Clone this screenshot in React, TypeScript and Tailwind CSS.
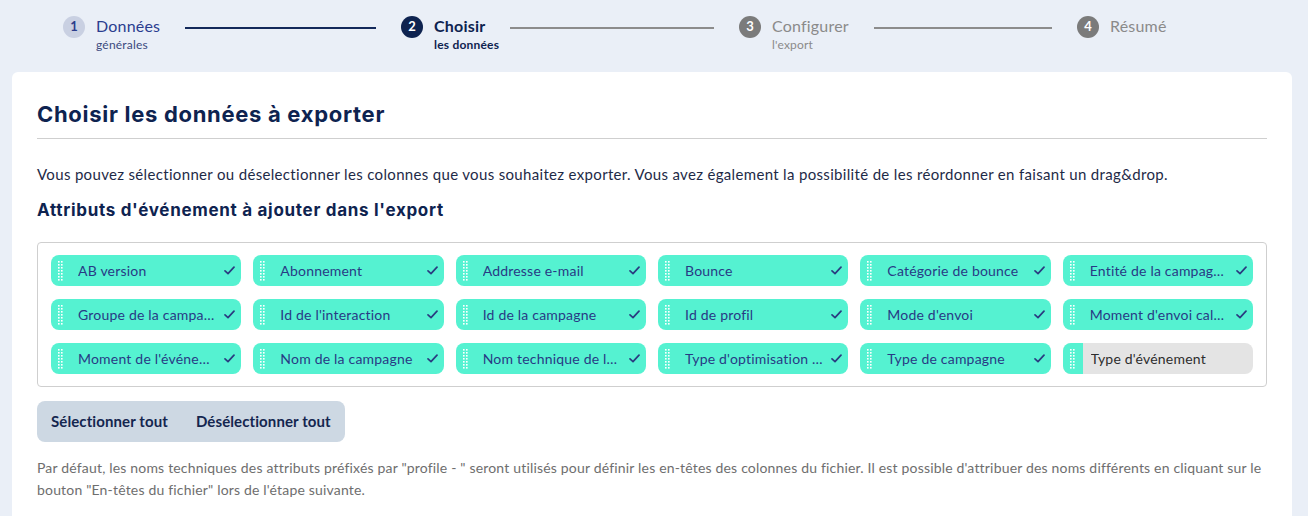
import React from "react";

const body = { fontFamily: "Lato, 'Open Sans', sans-serif" };
const head = { fontFamily: "Inter, 'Noto Sans', sans-serif" };

function Handle() {
  const dots = [];
  for (let r = 0; r < 7; r++) {
    dots.push(<rect key={"a" + r} x={0} y={r * 3} width={1.6} height={1.6} fill="#fff" />);
    dots.push(<rect key={"b" + r} x={3} y={r * 3} width={1.6} height={1.6} fill="#fff" />);
  }
  return (
    <svg width="5" height="20" viewBox="0 0 5 20" className="shrink-0">
      {dots}
    </svg>
  );
}

function Check() {
  return (
    <svg width="11" height="9" viewBox="0 0 11 9" className="shrink-0">
      <path d="M1 4.8 L4 7.6 L10 1.2" fill="none" stroke="#2a3b80" strokeWidth="1.7" strokeLinecap="round" strokeLinejoin="round" />
    </svg>
  );
}

const chips: { label: string; on: boolean }[] = [
  { label: "AB version", on: true },
  { label: "Abonnement", on: true },
  { label: "Addresse e-mail", on: true },
  { label: "Bounce", on: true },
  { label: "Catégorie de bounce", on: true },
  { label: "Entité de la campag…", on: true },
  { label: "Groupe de la campa…", on: true },
  { label: "Id de l'interaction", on: true },
  { label: "Id de la campagne", on: true },
  { label: "Id de profil", on: true },
  { label: "Mode d'envoi", on: true },
  { label: "Moment d'envoi cal…", on: true },
  { label: "Moment de l'événe…", on: true },
  { label: "Nom de la campagne", on: true },
  { label: "Nom technique de l…", on: true },
  { label: "Type d'optimisation …", on: true },
  { label: "Type de campagne", on: true },
  { label: "Type d'événement", on: false },
];

function Chip({ label, on }: { label: string; on: boolean }) {
  if (on) {
    return (
      <div className="h-[31px] rounded-[8px] bg-[#55f2d1] flex items-center pl-[7px] pr-[6px]">
        <Handle />
        <span className="ml-[15px] flex-1 min-w-0 truncate text-[14px] tracking-[0.2px] text-[#283a85]">{label}</span>
        <Check />
      </div>
    );
  }
  return (
    <div className="h-[31px] rounded-[8px] bg-[#e4e4e4] flex items-center overflow-hidden">
      <div className="h-full w-[20px] bg-[#55f2d1] flex items-center pl-[7px]">
        <Handle />
      </div>
      <span className="ml-[8px] flex-1 min-w-0 truncate text-[14px] tracking-[0.2px] text-[#2d2d2d]">{label}</span>
    </div>
  );
}

function Step({
  n,
  title,
  sub,
  state,
  line,
}: {
  n: number;
  title: string;
  sub?: string;
  state: "done" | "active" | "todo";
  line?: "dark" | "grey";
}) {
  const circle =
    state === "done"
      ? "bg-[#c9d0e2] text-[#2b3d8c]"
      : state === "active"
      ? "bg-[#0e2350] text-white"
      : "bg-[#7b7b7b] text-white";
  const titleCls =
    state === "done"
      ? "text-[#2b3d8f] font-normal"
      : state === "active"
      ? "text-[#0e2350] font-bold"
      : "text-[#8a8a8a] font-normal";
  const subCls =
    state === "done"
      ? "text-[#3b4a7e] font-normal"
      : state === "active"
      ? "text-[#0e2350] font-bold"
      : "text-[#8a8a8a] font-normal";
  return (
    <div className={line ? "w-[338px] flex items-start shrink-0" : "flex items-start shrink-0"}>
      <div className={"w-[22px] h-[22px] rounded-full flex items-center justify-center text-[13px] font-bold shrink-0 " + circle}>
        {n}
      </div>
      <div className="relative ml-[11px] -mt-[1px]">
        <div className={"text-[16px] leading-[22px] tracking-[0.2px] whitespace-nowrap " + titleCls}>{title}</div>
        {sub && (
          <div className={"absolute left-0 top-[22px] text-[12px] leading-[16px] tracking-[0.2px] whitespace-nowrap " + subCls}>{sub}</div>
        )}
      </div>
      {line && (
        <div
          className={
            "flex-1 mx-[25px] mt-[11px] h-[1.5px] " + (line === "dark" ? "bg-[#13295a]" : "bg-[#8c8c8c]")
          }
        />
      )}
    </div>
  );
}

export default function App() {
  return (
    <div className="h-[516px] bg-[#eaeff7] overflow-hidden" style={body}>
      <div className="flex pl-[63px] pt-[16px] h-[72px]">
        <Step n={1} title="Données" sub="générales" state="done" line="dark" />
        <Step n={2} title="Choisir" sub="les données" state="active" line="grey" />
        <Step n={3} title="Configurer" sub="l'export" state="todo" line="grey" />
        <Step n={4} title="Résumé" state="todo" />
      </div>
      <div className="ml-[12px] mr-[16px] bg-white rounded-t-[6px] px-[25px] pt-[27px] pb-[30px]">
        <h1 className="text-[22px] leading-[30px] font-bold tracking-[0.7px] text-[#0e2350] pb-[9px] border-b border-[#cfcfcf]" style={head}>
          Choisir les données à exporter
        </h1>
        <p className="mt-[24px] text-[15px] leading-[22px] tracking-[0.33px] text-[#1e2a47]">
          Vous pouvez sélectionner ou déselectionner les colonnes que vous souhaitez exporter. Vous avez également la possibilité de les réordonner en faisant un drag&amp;drop.
        </p>
        <h2 className="mt-[13px] text-[17px] leading-[24px] font-bold tracking-[0.7px] text-[#0e2350]" style={head}>
          Attributs d'événement à ajouter dans l'export
        </h2>
        <div className="mt-[20px] border border-[#cfcfcf] rounded-[4px] px-[13px] pt-[12px] pb-[12px] grid grid-cols-6 gap-x-[12px] gap-y-[13px]">
          {chips.map((c) => (
            <Chip key={c.label} label={c.label} on={c.on} />
          ))}
        </div>
        <div className="mt-[14px] inline-flex h-[41px] items-center bg-[#cdd8e3] rounded-[8px] text-[15px] font-bold tracking-[0.1px] text-[#14264f]">
          <span className="px-[14px]">Sélectionner tout</span>
          <span className="px-[14px]">Désélectionner tout</span>
        </div>
        <div className="mt-[15px] text-[14px] leading-[22px] tracking-[0.18px] text-[#6e6e6e]">
          <p className="whitespace-nowrap">
            Par défaut, les noms techniques des attributs préfixés par "profile - " seront utilisés pour définir les en-têtes des colonnes du fichier. Il est possible d'attribuer des noms différents en cliquant sur le
          </p>
          <p>bouton "En-têtes du fichier" lors de l'étape suivante.</p>
        </div>
      </div>
    </div>
  );
}
